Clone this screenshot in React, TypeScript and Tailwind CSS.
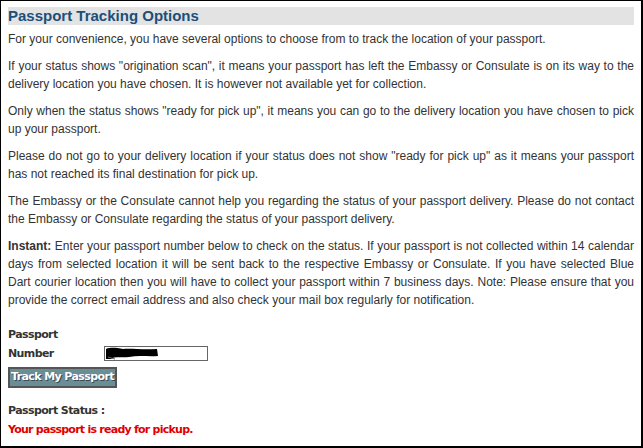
export default function App() {
  const body = "text-[12px] leading-[18px] text-[#333] text-justify mb-[9px]"
  const label = "font-['DejaVu_Sans',sans-serif] font-bold text-[11px] tracking-[-0.6px] text-[#333]"

  return (
    <div className="w-[643px] h-[448px] bg-white border-t border-l border-r-2 border-b-2 border-black font-['Liberation_Sans',Arial,sans-serif] overflow-hidden">
      <div className="pl-[7px] pr-[7px] pt-[6px]">
        <h1 className="bg-[#e3e3e3] h-[18px] leading-[18px] text-[15px] font-bold text-[#1b4f7a] mb-[5px]">
          Passport Tracking Options
        </h1>

        <p className={body}>
          For your convenience, you have several options to choose from to track the location of your passport.
        </p>
        <p className={body}>
          If your status shows "origination scan", it means your passport has left the Embassy or Consulate is on its way to the delivery location you have chosen. It is however not available yet for collection.
        </p>
        <p className={body}>
          Only when the status shows "ready for pick up", it means you can go to the delivery location you have chosen to pick up your passport.
        </p>
        <p className={body}>
          Please do not go to your delivery location if your status does not show "ready for pick up" as it means your passport has not reached its final destination for pick up.
        </p>
        <p className={body}>
          The Embassy or the Consulate cannot help you regarding the status of your passport delivery. Please do not contact the Embassy or Consulate regarding the status of your passport delivery.
        </p>
        <p className={body}>
          <b>Instant:</b> Enter your passport number below to check on the status. If your passport is not collected within 14 calendar days from selected location it will be sent back to the respective Embassy or Consulate. If you have selected Blue Dart courier location then you will have to collect your passport within 7 business days. Note: Please ensure that you provide the correct email address and also check your mail box regularly for notification.
        </p>

        <div className="mt-[16px] flex items-end">
          <div className={`${label} w-[96px] leading-[19px]`}>
            <div>Passport</div>
            <div>Number</div>
          </div>
          <div className="relative w-[104px] h-[15px] border border-[#666] bg-white mb-[2px]">
            <svg width="60" height="13" viewBox="0 0 60 13" className="absolute left-0 top-0">
              <path d="M1 2 C6 0 12 1 18 2 C26 1 36 3 52 2 L53 9 C44 10 34 8 24 10 C16 11 10 9 6 12 L1 12 Z" fill="#000" />
              <path d="M3 10 L10 12" stroke="#666" strokeWidth="1" />
            </svg>
          </div>
        </div>

        <button className="mt-[4px] h-[21px] w-[109px] border-2 border-[#555] bg-[#6a8e96] text-white font-['DejaVu_Sans',sans-serif] font-bold text-[11px] tracking-[-0.6px] [text-shadow:1px_1px_0_#3a4a50]">
          Track My Passport
        </button>

        <div className={`${label} mt-[13px] leading-[19px]`}>Passport Status :</div>
        <div className="font-['DejaVu_Sans',sans-serif] font-bold text-[11px] tracking-[-0.75px] text-[#e00000] leading-[19px]">
          Your passport is ready for pickup.
        </div>
      </div>
    </div>
  )
}
